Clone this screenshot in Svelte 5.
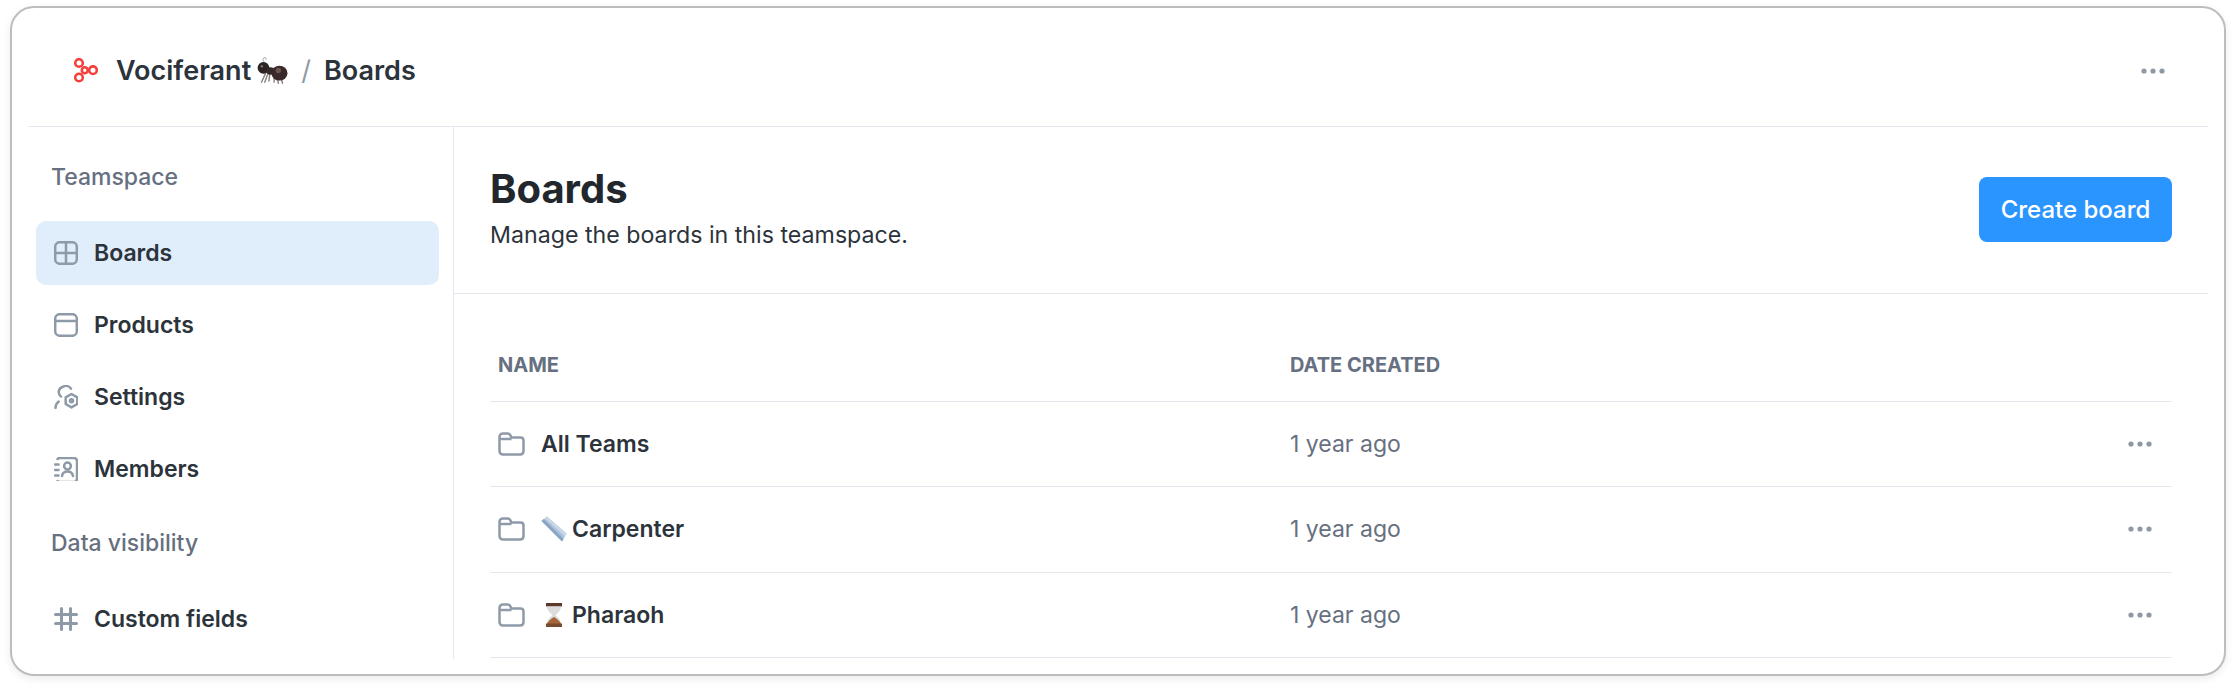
<script>
  const navTop = [
    { label: 'Boards', icon: 'grid', active: true },
    { label: 'Products', icon: 'panel' },
    { label: 'Settings', icon: 'gear' },
    { label: 'Members', icon: 'book' }
  ];
  const rows = [
    { name: 'All Teams', emoji: null },
    { name: 'Carpenter', emoji: 'ruler' },
    { name: 'Pharaoh', emoji: 'glass' }
  ];
</script>

{#snippet navIcon(kind)}
  <svg class="nav-icon" viewBox="0 0 24 24" fill="none" stroke="currentColor" stroke-width="2.500" stroke-linecap="round" stroke-linejoin="round">
    {#if kind === 'grid'}
      <rect x="1.200" y="1.200" width="21.600" height="21.600" rx="4.500" />
      <path d="M12 1.200v21.600M1.200 12h21.600" />
    {:else if kind === 'panel'}
      <rect x="1.200" y="1.200" width="21.600" height="21.600" rx="4.500" />
      <path d="M1.200 8h21.600" />
    {:else if kind === 'gear'}
      <path d="M7 11.500a5.500 5.500 0 0 1 2-9.800 6 6 0 0 1 8 2" />
      <path d="M1.500 23c0-2.700 1.200-5 3.200-6.500" />
      <path d="M17.500 9l5.800 3.400v6.600l-5.800 3.400-5.800-3.400v-6.600z" />
      <circle cx="17.500" cy="15.700" r="1.500" />
    {:else if kind === 'book'}
      <path d="M3.500 2C4 1.300 4.800 1 6 1h14a3 3 0 0 1 3 3v18a3 3 0 0 1-3 3H6c-1.200 0-2-.3-2.500-1" />
      <path d="M1 7.500h3.500M1 13h3.500M1 18.500h3.500" />
      <circle cx="13.500" cy="9" r="3.400" />
      <path d="M8 19c.5-3 2.500-4.500 5.500-4.500s5 1.500 5.500 4.500" />
    {:else}
      <path stroke-width="3" d="M7.500 1.500v21M16.500 1.500v21M1.500 7.500h21M1.500 16.500h21" />
    {/if}
  </svg>
{/snippet}

{#snippet dots()}
  <svg class="dots" viewBox="0 0 24 6" fill="#8f99a6">
    <circle cx="3" cy="3" r="2.600" /><circle cx="12" cy="3" r="2.600" /><circle cx="21" cy="3" r="2.600" />
  </svg>
{/snippet}

<div class="page">
  <div class="card">
    <header class="topbar">
      <svg class="logo" viewBox="0 0 25 25" fill="none" stroke="#f5403c" stroke-width="2.600">
        <circle cx="6" cy="5" r="3.800" />
        <circle cx="6" cy="19.500" r="3.800" />
        <circle cx="20" cy="12.200" r="3.800" />
        <circle cx="11.800" cy="12.200" r="3" />
      </svg>
      <span class="crumb">Vociferant</span>
      <svg class="ant" viewBox="0 0 30 30">
        <path d="M8 7C6 5 6 3 8 2.500M8 2.500c1.500 0 2 1 1 2" fill="none" stroke="#a09a98" stroke-width="0.900" />
        <g stroke="#8a817c" stroke-width="1.300" fill="none">
          <path d="M9 17L5 26M11 18l-3 8M13 18l-1 7M17 19l0 7M20 20l1 7M23 20l2 7" />
        </g>
        <circle cx="7" cy="12" r="5.500" fill="#2b2422" />
        <ellipse cx="13.500" cy="15" rx="4" ry="3.500" fill="#332a28" />
        <ellipse cx="22" cy="17" rx="7.500" ry="7" fill="#3a2b28" />
        <circle cx="21" cy="14.500" r="2.500" fill="#6b5650" />
        <circle cx="5.500" cy="10.500" r="1.200" fill="#77706c" />
      </svg>
      <span class="slash">/</span>
      <span class="crumb">Boards</span>
      <span class="top-dots">{@render dots()}</span>
    </header>

    <div class="body">
      <aside class="sidebar">
        <div class="group first">Teamspace</div>
        {#each navTop as item}
          <div class="nav" class:active={item.active}>
            {@render navIcon(item.icon)}
            <span>{item.label}</span>
          </div>
        {/each}
        <div class="group">Data visibility</div>
        <div class="nav">
          {@render navIcon('hash')}
          <span>Custom fields</span>
        </div>
      </aside>

      <main class="main">
        <div class="head">
          <div class="title-block">
            <h1>Boards</h1>
            <p>Manage the boards in this teamspace.</p>
          </div>
          <button>Create board</button>
        </div>

        <div class="table">
          <div class="tr th">
            <div class="col-name">NAME</div>
            <div class="col-date">DATE CREATED</div>
          </div>
          {#each rows as row}
            <div class="tr">
              <div class="col-name name">
                <svg class="folder" viewBox="0 0 27 24" fill="none" stroke="#8f9aa8" stroke-width="2.500" stroke-linejoin="round">
                  <path d="M1.500 5c0-2 1.500-3.500 3.500-3.500h4.500c1.500 0 2.500.8 3 2l.8 2H22.500c1.800 0 3 1.200 3 3V19c0 2-1.300 3.500-3.500 3.500H5c-2 0-3.500-1.500-3.500-3.500z" />
                  <path d="M1.500 7h12" />
                </svg>
                {#if row.emoji === 'ruler'}
                  <svg class="emoji" viewBox="0 0 26 26">
                    <path d="M6 0.500L25.500 17.500 21 25.500 0.500 5z" fill="#a9c1dc" />
                    <path d="M6 0.500L25.500 17.500l-1.500 3L4 2.500z" fill="#c9d7e6" />
                    <path d="M0.500 5L21 25.500l1.500-2.500L2.500 3z" fill="#8aa5c4" />
                  </svg>
                {:else if row.emoji === 'glass'}
                  <svg class="emoji" viewBox="0 0 26 26">
                    <path d="M5 1h16v3.500H5z" fill="#5b3a2a" />
                    <path d="M6 4.500h14c0 4-3 6-5.500 8.500C17 15.500 20 18 20 22H6c0-4 3-6.500 5.500-9C9 10.500 6 8.500 6 4.500z" fill="#dcdcdc" />
                    <path d="M13 15c-2.500 1.500-6 4-7 7h14c-1-3-4.500-5.500-7-7z" fill="#a5643a" />
                    <path d="M5 21.500h16V25H5z" fill="#7a4a2c" />
                  </svg>
                {/if}
                <span>{row.name}</span>
              </div>
              <div class="col-date date">1 year ago</div>
              <div class="col-act">{@render dots()}</div>
            </div>
          {/each}
        </div>
      </main>
    </div>
  </div>
</div>

<style>
  :global(body) {
    margin: 0;
    background: #fff;
  }

  .page {
    padding: 6px 10px 14px;
    font-family: "Inter", "Liberation Sans", sans-serif;
    color: #2c333b;
  }

  .card {
    box-sizing: border-box;
    height: 670px;
    padding: 0 16px;
    background: #fff;
    border: 2px solid #bdbdbd;
    border-radius: 24px;
    box-shadow: 0 3px 8px rgba(0, 0, 0, 0.08);
  }

  .topbar {
    box-sizing: border-box;
    display: flex;
    align-items: center;
    height: 119px;
    padding: 7px 0 0 45px;
    border-bottom: 1px solid #e3e8ee;
  }

  .logo {
    width: 25px;
    height: 25px;
    margin-right: 18px;
  }

  .crumb {
    font-size: 27px;
    font-weight: 600;
    color: #2c333b;
  }

  .ant {
    width: 32px;
    height: 32px;
    margin-left: 5px;
  }

  .slash {
    margin: 0 13px 0 13px;
    font-size: 27px;
    color: #8f9aa8;
  }

  .top-dots {
    display: flex;
    margin-left: auto;
    margin-right: 43px;
  }

  .dots {
    width: 24px;
    height: 6px;
  }

  .body {
    display: flex;
    height: 532px;
  }

  .sidebar {
    box-sizing: border-box;
    width: 426px;
    flex: none;
    padding: 0 14px 0 8px;
    border-right: 1px solid #e3e8ee;
  }

  .group {
    padding: 0 0 0 15px;
    height: 50px;
    margin: 17px 0 19px;
    display: flex;
    align-items: center;
    font-size: 23px;
    font-weight: 500;
    color: #667080;
  }

  .group.first {
    margin-top: 25px;
  }

  .nav {
    display: flex;
    align-items: center;
    gap: 16px;
    height: 64px;
    margin-bottom: 8px;
    padding-left: 18px;
    border-radius: 10px;
    font-size: 23px;
    font-weight: 600;
    color: #2c333b;
  }

  .nav.active {
    background: #e0edfb;
  }

  .nav-icon {
    width: 24px;
    height: 24px;
    color: #8f9aa8;
    flex: none;
  }

  .main {
    flex: 1;
    min-width: 0;
  }

  .head {
    box-sizing: border-box;
    display: flex;
    justify-content: space-between;
    align-items: center;
    height: 167px;
    padding: 0 36px 2px;
    border-bottom: 1px solid #e3e8ee;
  }

  .title-block {
    margin-bottom: 3px;
  }

  h1 {
    margin: 0 0 8px;
    font-size: 40px;
    font-weight: 700;
    line-height: 46px;
    color: #22272e;
  }

  .head p {
    margin: 0;
    font-size: 23.200px;
    line-height: 30px;
    color: #2c333b;
  }

  button {
    width: 193px;
    height: 65px;
    border: none;
    border-radius: 8px;
    background: #2b95ff;
    color: #fff;
    font-family: inherit;
    font-size: 24px;
    font-weight: 500;
  }

  .table {
    padding: 22px 36px 0;
  }

  .tr {
    box-sizing: border-box;
    display: flex;
    align-items: center;
    height: 85.500px;
    border-bottom: 1px solid #e3e8ee;
  }

  .th {
    padding-top: 14px;
    font-size: 20px;
    font-weight: 700;
    color: #667080;
  }

  .col-name {
    box-sizing: border-box;
    width: 800px;
    padding-left: 8px;
  }

  .col-date {
    flex: 1;
  }

  .col-act {
    display: flex;
    width: 44px;
  }

  .name {
    display: flex;
    align-items: center;
    font-size: 23px;
    font-weight: 600;
    color: #2c333b;
  }

  .folder {
    width: 27px;
    height: 24px;
    margin-right: 16px;
  }

  .emoji {
    width: 26px;
    height: 26px;
    margin-right: 5px;
  }

  .date {
    font-size: 23px;
    color: #667080;
  }
</style>
